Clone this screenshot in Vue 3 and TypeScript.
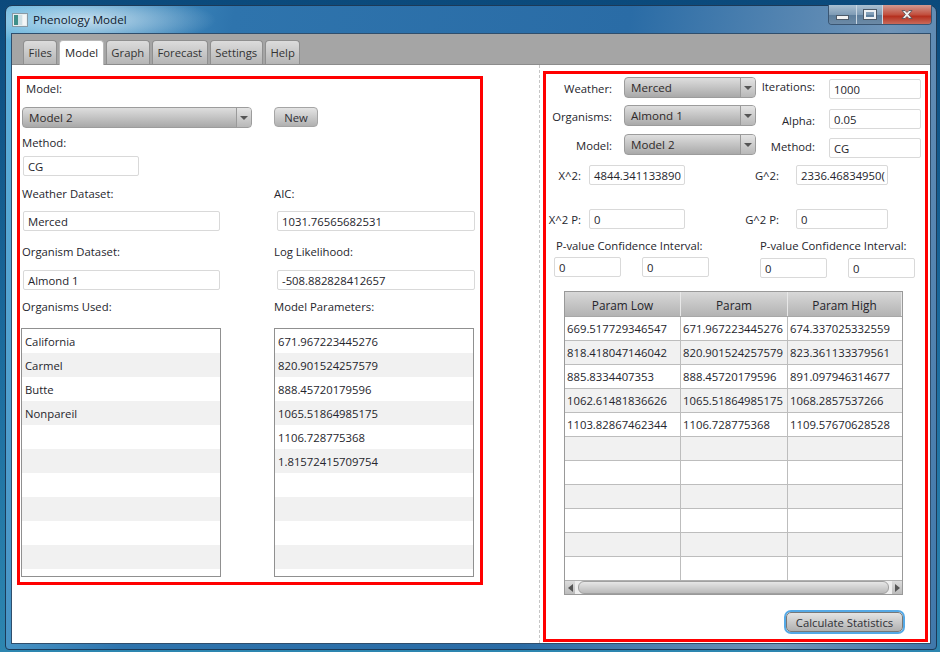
<script setup lang="ts">
const tabs = ['Files', 'Model', 'Graph', 'Forecast', 'Settings', 'Help']

const organisms = ['California', 'Carmel', 'Butte', 'Nonpareil', '', '', '', '', '', '']
const modelParams = [
  '671.967223445276',
  '820.901524257579',
  '888.45720179596',
  '1065.51864985175',
  '1106.728775368',
  '1.81572415709754',
  '',
  '',
  '',
  ''
]

const statRows = [
  ['669.517729346547', '671.967223445276', '674.337025332559'],
  ['818.418047146042', '820.901524257579', '823.361133379561'],
  ['885.8334407353', '888.45720179596', '891.097946314677'],
  ['1062.61481836626', '1065.51864985175', '1068.2857537266'],
  ['1103.82867462344', '1106.728775368', '1109.57670628528'],
  ['', '', ''],
  ['', '', ''],
  ['', '', ''],
  ['', '', ''],
  ['', '', ''],
  ['', '', '']
]
</script>

<template>
  <div class="desktop">
    <div class="window">
      <div class="titlebar">
        <svg class="app-icon" width="16" height="14" viewBox="0 0 16 14">
          <rect x="0.5" y="0.5" width="15" height="13" fill="#e8eef0" stroke="#8a9aa5" />
          <rect x="2" y="2" width="4" height="10" fill="#3f8f8a" />
          <rect x="6" y="2" width="4" height="10" fill="#cfe0e6" />
          <rect x="11" y="2" width="3" height="10" fill="#f4f6f7" />
        </svg>
        <span class="title">Phenology Model</span>
        <div class="caption">
          <div class="cap cap-min"><span class="min-glyph"></span></div>
          <div class="cap cap-max"><span class="max-glyph"></span></div>
          <div class="cap cap-close">
            <svg width="14" height="11" viewBox="0 0 14 11">
              <path d="M2 1.500h3l2 2 2-2h3l-3.400 4 3.400 4H9l-2-2-2 2H2l3.400-4z" fill="#f2f2f2" stroke="#4d4d55" stroke-width="0.800" />
            </svg>
          </div>
        </div>
      </div>

      <div class="client">
        <div class="tabbar">
          <div v-for="tab in tabs" :key="tab" class="tab" :class="{ active: tab === 'Model' }">{{ tab }}</div>
        </div>

        <div class="panes">
          <div class="left-pane">
            <div class="left-box">
              <div class="lbl first-lbl">Model:</div>
              <div class="model-row">
                <div class="combo combo-wide">
                  <span>Model 2</span>
                  <i class="arrow"><b></b></i>
                </div>
                <button class="btn new-btn">New</button>
              </div>
              <div class="lbl method-lbl">Method:</div>
              <div class="field method-field">CG</div>

              <div class="two-col weather-labels">
                <div class="lbl">Weather Dataset:</div>
                <div class="lbl">AIC:</div>
              </div>
              <div class="two-col value-row">
                <div class="field w197">Merced</div>
                <div class="field w198 second">1031.76565682531</div>
              </div>
              <div class="two-col organism-labels">
                <div class="lbl">Organism Dataset:</div>
                <div class="lbl">Log Likelihood:</div>
              </div>
              <div class="two-col value-row likelihood-row">
                <div class="field w197">Almond 1</div>
                <div class="field w198 second">-508.882828412657</div>
              </div>
              <div class="two-col used-labels">
                <div class="lbl">Organisms Used:</div>
                <div class="lbl">Model Parameters:</div>
              </div>
              <div class="lists">
                <div class="list">
                  <div v-for="(item, i) in organisms" :key="i" class="list-row" :class="{ odd: i % 2 === 1 }">{{ item }}</div>
                </div>
                <div class="list">
                  <div v-for="(item, i) in modelParams" :key="i" class="list-row" :class="{ odd: i % 2 === 1 }">{{ item }}</div>
                </div>
              </div>
            </div>
          </div>

          <div class="right-pane">
            <div class="right-box">
              <div class="top-grid">
                <div class="combo-col">
                  <div class="combo-line">
                    <span class="side-lbl">Weather:</span>
                    <div class="combo combo-small"><span>Merced</span><i class="arrow"><b></b></i></div>
                  </div>
                  <div class="combo-line">
                    <span class="side-lbl">Organisms:</span>
                    <div class="combo combo-small"><span>Almond 1</span><i class="arrow"><b></b></i></div>
                  </div>
                  <div class="combo-line">
                    <span class="side-lbl">Model:</span>
                    <div class="combo combo-small"><span>Model 2</span><i class="arrow"><b></b></i></div>
                  </div>
                </div>
                <div class="input-col">
                  <div class="input-line">
                    <span class="side-lbl2 up2">Iterations:</span>
                    <div class="field w92">1000</div>
                  </div>
                  <div class="input-line">
                    <span class="side-lbl2 down1">Alpha:</span>
                    <div class="field w92">0.05</div>
                  </div>
                  <div class="input-line">
                    <span class="side-lbl2 up1">Method:</span>
                    <div class="field w92">CG</div>
                  </div>
                </div>
              </div>

              <div class="stat-row chi">
                <span class="stat-lbl">X^2:</span>
                <div class="field w96">4844.341133890</div>
                <span class="stat-lbl second-lbl">G^2:</span>
                <div class="field w92">2336.46834950(</div>
              </div>
              <div class="stat-row chi-p">
                <span class="stat-lbl">X^2 P:</span>
                <div class="field w96">0</div>
                <span class="stat-lbl second-lbl">G^2 P:</span>
                <div class="field w92">0</div>
              </div>

              <div class="ci-labels">
                <span>P-value Confidence Interval:</span>
                <span>P-value Confidence Interval:</span>
              </div>
              <div class="ci-row">
                <div class="ci-pair">
                  <div class="field w67">0</div>
                  <div class="field w67">0</div>
                </div>
                <div class="ci-pair lower">
                  <div class="field w67">0</div>
                  <div class="field w67">0</div>
                </div>
              </div>

              <div class="table">
                <div class="thead">
                  <div class="th c1">Param Low</div>
                  <div class="th c2">Param</div>
                  <div class="th c3">Param High</div>
                </div>
                <div class="tbody">
                  <div v-for="(row, i) in statRows" :key="i" class="tr" :class="{ odd: i % 2 === 1 }">
                    <div class="td c1">{{ row[0] }}</div>
                    <div class="td c2">{{ row[1] }}</div>
                    <div class="td c3">{{ row[2] }}</div>
                  </div>
                </div>
                <div class="hscroll">
                  <div class="sb-btn"><b class="tri-left"></b></div>
                  <div class="sb-track"><div class="sb-thumb"></div></div>
                  <div class="sb-btn"><b class="tri-right"></b></div>
                </div>
              </div>

              <div class="calc-row">
                <button class="btn calc-btn">Calculate Statistics</button>
              </div>
            </div>
          </div>
        </div>
      </div>
    </div>
  </div>
</template>

<style>
html,
body {
  margin: 0;
  padding: 0;
  background: #123f6b;
}
</style>

<style scoped>
.desktop {
  width: 940px;
  height: 652px;
  box-sizing: border-box;
  padding: 5px 3px 2px 5px;
  overflow: hidden;
  background: linear-gradient(180deg, #0b4a7c 0%, #1c6c9e 55%, #2d86b0 100%);
  font-family: "Open Sans", "Noto Sans", sans-serif;
  font-size: 11.3px;
  color: #25252c;
}

.window {
  width: 932px;
  height: 645px;
  box-sizing: border-box;
  border: 1px solid #1c3a58;
  border-radius: 7px 7px 4px 4px;
  padding: 0 5px 5px 5px;
  background:
    radial-gradient(ellipse 130px 26px at 80px 14px, rgba(235, 244, 250, 0.75) 0%, rgba(235, 244, 250, 0) 100%),
    linear-gradient(100deg, #5fb2dc 0%, #2e74ad 22%, #2a6ca6 60%, #6f94b8 85%, #3f78ab 100%);
  display: flex;
  flex-direction: column;
}

.titlebar {
  height: 27px;
  flex: none;
  display: flex;
  align-items: center;
  position: relative;
}

.app-icon {
  margin-left: 1px;
}

.title {
  margin-left: 5px;
  margin-bottom: 1px;
  font-size: 11.6px;
  color: #10202e;
}

.caption {
  position: absolute;
  top: -1px;
  right: -1px;
  display: flex;
  height: 19px;
  border: 1px solid #3a5673;
  border-top: none;
  border-radius: 0 0 4px 4px;
  overflow: hidden;
}

.cap {
  height: 100%;
  display: flex;
  align-items: center;
  justify-content: center;
  box-sizing: border-box;
}

.cap-min {
  width: 28px;
  border-right: 1px solid #c9d6e2;
  background: linear-gradient(180deg, #aac0d2 0%, #7f9cb6 50%, #5d7e9c 55%, #6c8aa6 100%);
}

.cap-max {
  width: 26px;
  border-right: 1px solid #c9d6e2;
  background: linear-gradient(180deg, #aac0d2 0%, #7f9cb6 50%, #5d7e9c 55%, #6c8aa6 100%);
}

.cap-close {
  width: 48px;
  background: linear-gradient(180deg, #d39a91 0%, #c2503f 50%, #b5301f 60%, #c96a5a 100%);
}

.min-glyph {
  width: 11px;
  height: 3px;
  margin-top: 6px;
  background: #f2f2f2;
  border: 1px solid #4d5a68;
}

.max-glyph {
  width: 8px;
  height: 5px;
  border: 2px solid #eef1f4;
  outline: 1px solid #4d5a68;
}

.client {
  flex: 1;
  min-height: 0;
  border: 1px solid #2f4e6c;
  background: #fff;
  display: flex;
  flex-direction: column;
}

.tabbar {
  height: 31px;
  flex: none;
  box-sizing: border-box;
  background: #a5a5a5;
  border-bottom: 1px solid #8c8c8c;
  padding: 6px 0 0 11px;
  display: flex;
  gap: 2px;
  align-items: flex-end;
}

.tab {
  height: 24px;
  box-sizing: border-box;
  padding: 0 4.6px;
  line-height: 24px;
  border: 1px solid #8f8f8f;
  border-bottom: none;
  border-radius: 4px 4px 0 0;
  background: linear-gradient(180deg, #dcdcdc 0%, #b5b5b5 100%);
  color: #333;
}

.tab.active {
  height: 25px;
  background: #fff;
  border-color: #b8b8b8;
  margin-bottom: -1px;
  color: #1f1f26;
}

.panes {
  flex: 1;
  min-height: 0;
  display: flex;
}

.left-pane {
  width: 528px;
  flex: none;
  box-sizing: border-box;
  border-right: 1px dashed #c6c6c6;
  padding: 11px 0 0 5px;
}

.left-box {
  width: 466px;
  height: 509px;
  box-sizing: border-box;
  border: 3px solid #ff0000;
  padding-left: 2px;
}

.lbl {
  line-height: 16px;
  height: 16px;
  white-space: nowrap;
}

.first-lbl {
  margin: 2px 0 0 4px;
}

.model-row {
  margin-top: 10px;
  display: flex;
  align-items: flex-start;
  gap: 22px;
}

.combo {
  height: 21px;
  box-sizing: border-box;
  border: 1px solid #9c9c9c;
  border-radius: 4px;
  background: linear-gradient(180deg, #dedede 0%, #a9a9a9 100%);
  display: flex;
  align-items: center;
  padding-left: 6px;
  justify-content: space-between;
  color: #2f2a2a;
  font-size: 11.6px;
}

.combo-wide {
  width: 230px;
}

.combo-small {
  width: 132px;
}

.arrow {
  width: 15px;
  height: 100%;
  box-sizing: border-box;
  border-left: 1px solid #9a9a9a;
  background: linear-gradient(180deg, #e4e4e4 0%, #b8b8b8 100%);
  border-radius: 0 3px 3px 0;
  display: flex;
  align-items: center;
  justify-content: center;
}

.arrow b {
  width: 0;
  height: 0;
  border-left: 4px solid transparent;
  border-right: 4px solid transparent;
  border-top: 4px solid #555;
}

.btn {
  font-family: inherit;
  font-size: 11.3px;
  color: #2f2f35;
  padding: 0;
  border: 1px solid #a5a5a5;
  border-radius: 4px;
  background: linear-gradient(180deg, #e4e4e4 0%, #b0b0b0 100%);
}

.new-btn {
  width: 44px;
  height: 20px;
}

.method-lbl {
  margin-top: 7px;
}

.field {
  height: 20px;
  box-sizing: border-box;
  border: 1px solid #d9d9d9;
  border-radius: 2px;
  background: #fff;
  padding-left: 4px;
  line-height: 19px;
  white-space: nowrap;
  overflow: hidden;
}

.method-field {
  width: 116px;
  margin: 5px 0 0 1px;
}

.two-col {
  display: grid;
  grid-template-columns: 252px 1fr;
}

.weather-labels {
  margin-top: 10px;
}

.value-row {
  margin-top: 9px;
  margin-left: 1px;
}

.w197 {
  width: 197px;
}

.w198 {
  width: 198px;
}

.second {
  margin-left: 2px;
}

.organism-labels {
  margin-top: 13px;
}

.likelihood-row {
  margin-top: 10px;
}

.used-labels {
  margin-top: 9px;
}

.lists {
  margin-top: 13px;
  margin-left: -1px;
  display: flex;
  gap: 53px;
}

.list {
  width: 200px;
  height: 249px;
  box-sizing: border-box;
  border: 1px solid #909090;
}

.list-row {
  height: 24px;
  line-height: 26px;
  padding-left: 3px;
}

.list-row.odd {
  background: #f1f1f1;
}

.right-pane {
  flex: 1;
  min-width: 0;
  padding: 6px 0 0 3px;
}

.right-box {
  width: 385px;
  height: 571px;
  box-sizing: border-box;
  border: 3px solid #ff0000;
}

.top-grid {
  display: flex;
}

.combo-col {
  width: 210px;
  flex: none;
  padding-top: 3px;
  display: flex;
  flex-direction: column;
  gap: 7px;
}

.combo-line {
  display: flex;
  align-items: center;
  justify-content: flex-end;
  gap: 12px;
}

.combo-line:nth-child(3) {
  margin-top: 1px;
}

.side-lbl {
  white-space: nowrap;
  margin-top: 2px;
}

.input-col {
  margin-left: 1px;
  padding-top: 5px;
  display: flex;
  flex-direction: column;
  gap: 9px;
}

.input-line {
  width: 164px;
  display: flex;
  align-items: center;
  justify-content: space-between;
}

.input-line:nth-child(2) {
  margin-top: 1px;
}

.side-lbl2 {
  width: 58px;
  text-align: right;
  white-space: nowrap;
}

.up2 {
  margin-bottom: 5px;
}

.up1 {
  margin-bottom: 4px;
}

.down1 {
  margin-top: 2px;
}

.w92 {
  width: 92px;
}

.w96 {
  width: 96px;
}

.w67 {
  width: 67px;
}

.stat-row {
  display: flex;
  align-items: center;
}

.chi {
  margin-top: 7px;
}

.chi-p {
  margin-top: 24px;
}

.stat-lbl {
  width: 35px;
  margin-right: 8px;
  text-align: right;
  white-space: nowrap;
}

.second-lbl {
  width: 40px;
  margin-left: 54px;
  margin-right: 17px;
}

.ci-labels {
  margin-top: 9px;
  margin-left: 10px;
  display: grid;
  grid-template-columns: 204px 1fr;
  line-height: 16px;
  white-space: nowrap;
}

.ci-row {
  margin-top: 3px;
  margin-left: 8px;
  display: grid;
  grid-template-columns: 206px 1fr;
}

.ci-pair {
  display: flex;
  gap: 21px;
}

.ci-pair.lower {
  margin-top: 1px;
}

.table {
  margin: 13px 0 0 18px;
  width: 339px;
  height: 304px;
  box-sizing: border-box;
  border: 1px solid #999;
  display: flex;
  flex-direction: column;
  overflow: hidden;
}

.thead {
  display: flex;
  height: 25px;
  flex: none;
  box-sizing: border-box;
  border-bottom: 1px solid #a8a8a8;
}

.th {
  box-sizing: border-box;
  font-size: 11.8px;
  line-height: 26px;
  text-align: center;
  border-right: 1px solid #e8e8e8;
  background: linear-gradient(180deg, #d8d8d8 0%, #b3b3b3 100%);
}

.c1 {
  width: 116px;
  flex: none;
}

.c2 {
  width: 107px;
  flex: none;
}

.c3 {
  flex: 1;
}

.tbody {
  flex: 1;
  min-height: 0;
  overflow: hidden;
}

.tr {
  display: flex;
  height: 24px;
  box-sizing: border-box;
  border-bottom: 1px solid #bdbdbd;
}

.tr.odd {
  background: #f1f1f1;
}

.td {
  box-sizing: border-box;
  line-height: 23px;
  padding-left: 2px;
  border-right: 1px solid #bdbdbd;
  white-space: nowrap;
  overflow: hidden;
}

.td.c3 {
  border-right: none;
}

.hscroll {
  height: 13px;
  flex: none;
  display: flex;
  background: #bdbdbd;
  border-top: 1px solid #b0b0b0;
}

.sb-btn {
  width: 10px;
  flex: none;
  display: flex;
  align-items: center;
  justify-content: center;
  background: linear-gradient(180deg, #dcdcdc 0%, #bcbcbc 100%);
}

.tri-left {
  border-top: 4px solid transparent;
  border-bottom: 4px solid transparent;
  border-right: 5px solid #555;
}

.tri-right {
  border-top: 4px solid transparent;
  border-bottom: 4px solid transparent;
  border-left: 5px solid #555;
}

.sb-track {
  flex: 1;
  background: #eee;
  padding: 0 3px;
}

.sb-thumb {
  height: 100%;
  box-sizing: border-box;
  border: 1px solid #a0a0a0;
  border-radius: 6px;
  background: linear-gradient(180deg, #e6e6e6 0%, #bababa 100%);
}

.calc-row {
  margin-top: 17px;
  display: flex;
  justify-content: flex-end;
  padding-right: 22px;
}

.calc-btn {
  width: 117px;
  height: 20px;
  border-color: #777;
  border-radius: 5px;
  box-shadow: 0 0 0 2px #55a9e6;
}
</style>
